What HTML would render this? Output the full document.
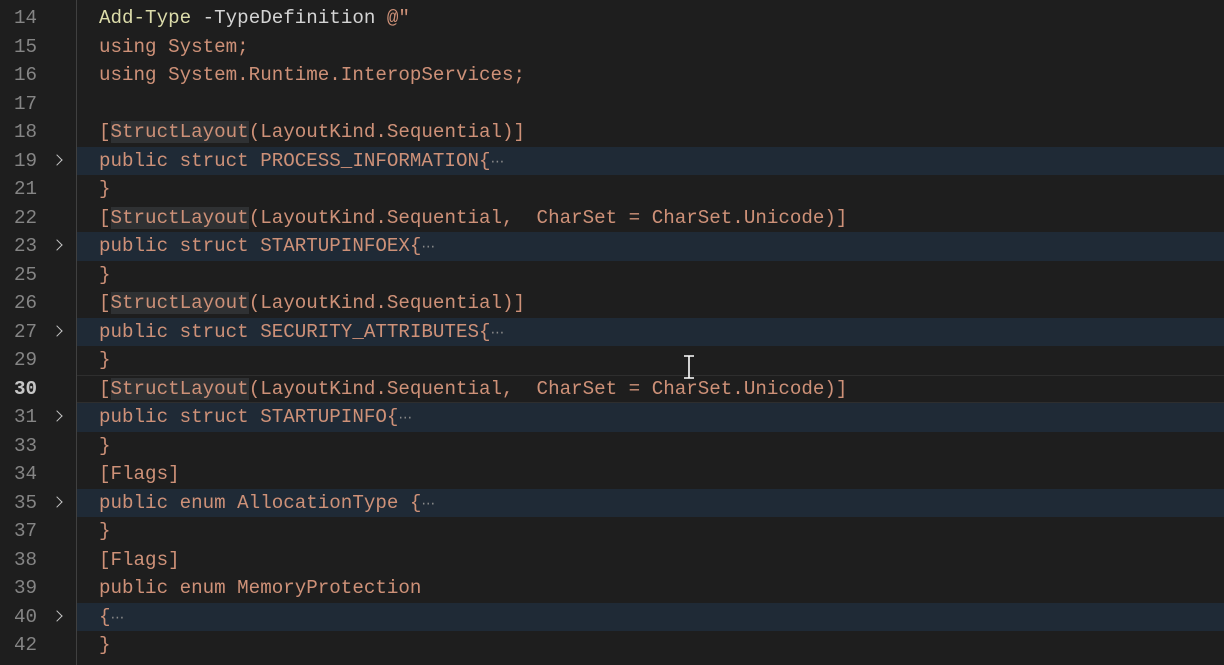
<!DOCTYPE html>
<html><head><style>
body{margin:0;width:1224px;height:665px;background:#1e1e1e;overflow:hidden;position:relative;font-family:"Liberation Mono",monospace;font-size:19.2px}
.r{position:absolute;left:0;width:1224px;height:28.5px;line-height:28.5px}
.n{position:absolute;left:0;width:37px;text-align:right;color:#858585}
.c{position:absolute;left:99px;color:#ce9178;white-space:pre}
.f .bg{position:absolute;left:77px;right:0;top:0;bottom:0;background:#1f2a36}
.ch{position:absolute;left:53px;top:9px;width:7px;height:7px;border-right:1.4px solid #c5c5c5;border-top:1.4px solid #c5c5c5;transform:rotate(45deg)}
.d{color:#8a8a8a;font-family:"DejaVu Sans",sans-serif;font-size:14px}
.sep{position:absolute;left:76px;top:0;width:1px;height:665px;background:#404040}
.hl{background:#2f3133}
.cur{border-top:1px solid #2e2e2e;border-bottom:1px solid #2e2e2e;box-sizing:border-box}
</style></head><body>
<div class="sep"></div>
<div class="r" style="top:4px"><span class="n">14</span><span class="c"><span style="color:#dcdcaa">Add-Type</span> <span style="color:#d4d4d4">-TypeDefinition</span> @"</span></div>
<div class="r" style="top:32.5px"><span class="n">15</span><span class="c">using System;</span></div>
<div class="r" style="top:61px"><span class="n">16</span><span class="c">using System.Runtime.InteropServices;</span></div>
<div class="r" style="top:89.5px"><span class="n">17</span></div>
<div class="r" style="top:118px"><span class="n">18</span><span class="c">[<span class="hl">StructLayout</span>(LayoutKind.Sequential)]</span></div>
<div class="r f" style="top:146.5px"><div class="bg"></div><span class="n">19</span><span class="ch"></span><span class="c">public struct PROCESS_INFORMATION{<span class="d">⋯</span></span></div>
<div class="r" style="top:175px"><span class="n">21</span><span class="c">}</span></div>
<div class="r" style="top:203.5px"><span class="n">22</span><span class="c">[<span class="hl">StructLayout</span>(LayoutKind.Sequential,  CharSet = CharSet.Unicode)]</span></div>
<div class="r f" style="top:232px"><div class="bg"></div><span class="n">23</span><span class="ch"></span><span class="c">public struct STARTUPINFOEX{<span class="d">⋯</span></span></div>
<div class="r" style="top:260.5px"><span class="n">25</span><span class="c">}</span></div>
<div class="r" style="top:289px"><span class="n">26</span><span class="c">[<span class="hl">StructLayout</span>(LayoutKind.Sequential)]</span></div>
<div class="r f" style="top:317.5px"><div class="bg"></div><span class="n">27</span><span class="ch"></span><span class="c">public struct SECURITY_ATTRIBUTES{<span class="d">⋯</span></span></div>
<div class="r" style="top:346px"><span class="n">29</span><span class="c">}</span></div>
<div class="r cur" style="top:374.5px;left:77px;width:1147px"></div>
<div class="r" style="top:374.5px"><span class="n" style="color:#c6c6c6;font-weight:bold">30</span><span class="c">[<span class="hl">StructLayout</span>(LayoutKind.Sequential,  CharSet = CharSet.Unicode)]</span></div>
<div class="r f" style="top:403px"><div class="bg"></div><span class="n">31</span><span class="ch"></span><span class="c">public struct STARTUPINFO{<span class="d">⋯</span></span></div>
<div class="r" style="top:431.5px"><span class="n">33</span><span class="c">}</span></div>
<div class="r" style="top:460px"><span class="n">34</span><span class="c">[Flags]</span></div>
<div class="r f" style="top:488.5px"><div class="bg"></div><span class="n">35</span><span class="ch"></span><span class="c">public enum AllocationType {<span class="d">⋯</span></span></div>
<div class="r" style="top:517px"><span class="n">37</span><span class="c">}</span></div>
<div class="r" style="top:545.5px"><span class="n">38</span><span class="c">[Flags]</span></div>
<div class="r" style="top:574px"><span class="n">39</span><span class="c">public enum MemoryProtection</span></div>
<div class="r f" style="top:602.5px"><div class="bg"></div><span class="n">40</span><span class="ch"></span><span class="c">{<span class="d">⋯</span></span></div>
<div class="r" style="top:631px"><span class="n">42</span><span class="c">}</span></div>
<svg style="position:absolute;left:682px;top:355px" width="14" height="25"><path d="M2 1h10M7 1v22M2 23h10" stroke="#fff" stroke-width="1.6" fill="none"/></svg>
</body></html>
